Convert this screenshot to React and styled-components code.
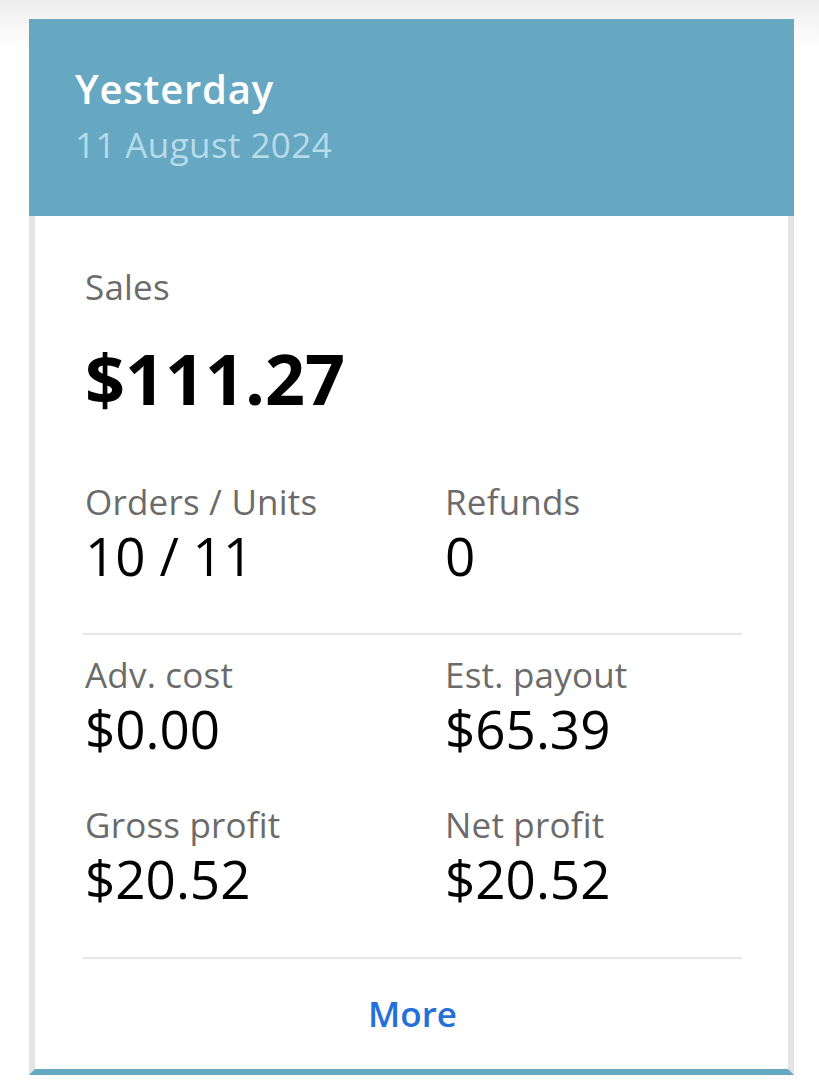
import styled, { createGlobalStyle } from 'styled-components';

const GlobalStyle = createGlobalStyle`
  html, body {
    margin: 0;
    padding: 0;
    background: linear-gradient(#eeeeee 0px, #ffffff 50px) no-repeat;
    background-color: #fff;
    font-family: "Open Sans", "Noto Sans", sans-serif;
  }
`;

const Page = styled.div`
  padding: 19px 25px 0 29px;
`;

const Card = styled.div`
  width: 765px;
`;

const Header = styled.div`
  background: #66a7c1;
  padding: 48px 46px 49px;
`;

const Title = styled.div`
  font-size: 40px;
  line-height: 44px;
  font-weight: 600;
  letter-spacing: 0.8px;
  color: #ffffff;
`;

const DateLine = styled.div`
  margin-top: 12px;
  font-size: 35px;
  line-height: 44px;
  letter-spacing: 0.4px;
  color: #b6dbe9;
`;

const Body = styled.div`
  border: 6px solid #e4e4e4;
  border-top: none;
  border-bottom-color: #66a7c1;
  padding: 51px 48px 35px 50px;
`;

const Label = styled.div`
  font-size: 35px;
  line-height: 40px;
  letter-spacing: 0.2px;
  color: #6b6b6b;
`;

const Value = styled.div`
  margin-top: 4px;
  font-size: 53px;
  line-height: 60px;
  color: #000;
`;

const BigValue = styled.div`
  margin-top: 33px;
  font-size: 70px;
  line-height: 76px;
  font-weight: 700;
  color: #000;
`;

const Grid = styled.div`
  display: grid;
  grid-template-columns: 360px 1fr;
  row-gap: 46px;
  margin-top: ${(p) => p.$top}px;
`;

const Divider = styled.hr`
  margin: ${(p) => p.$above}px -2px 0 -2px;
  border: none;
  height: 2px;
  background: #e6e6e6;
`;

const More = styled.a`
  display: block;
  margin-top: 35px;
  text-align: center;
  font-size: 35px;
  line-height: 40px;
  font-weight: 600;
  color: #2470d8;
  text-decoration: none;
`;

function Metric({ label, value }) {
  return (
    <div>
      <Label>{label}</Label>
      <Value>{value}</Value>
    </div>
  );
}

export default function App() {
  return (
    <Page>
      <GlobalStyle />
      <Card>
        <Header>
          <Title>Yesterday</Title>
          <DateLine>11 August 2024</DateLine>
        </Header>
        <Body>
          <Label>Sales</Label>
          <BigValue>$111.27</BigValue>
          <Grid $top={66}>
            <Metric label="Orders / Units" value="10 / 11" />
            <Metric label="Refunds" value="0" />
          </Grid>
          <Divider $above={47} />
          <Grid $top={20}>
            <Metric label="Adv. cost" value="$0.00" />
            <Metric label="Est. payout" value="$65.39" />
            <Metric label="Gross profit" value="$20.52" />
            <Metric label="Net profit" value="$20.52" />
          </Grid>
          <Divider $above={48} />
          <More href="#">More</More>
        </Body>
      </Card>
    </Page>
  );
}
